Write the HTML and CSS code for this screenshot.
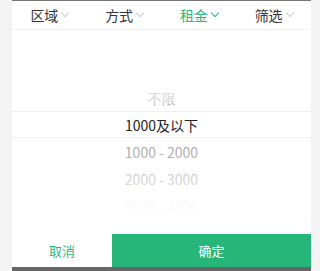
FILE: index.html
```html
<!DOCTYPE html>
<html lang="zh-CN">
<head>
  <meta charset="UTF-8">
  <title>租金筛选</title>
  <meta name="viewport" content="width=device-width, initial-scale=1.0">
  <link rel="stylesheet" href="styles.css">
</head>
<body>
  <div class="panel">
    <div class="topbar"></div>
    <div class="tabs">
      <div class="tab">区域<span class="arrow"></span></div>
      <div class="tab">方式<span class="arrow"></span></div>
      <div class="tab active">租金<span class="arrow"></span></div>
      <div class="tab">筛选<span class="arrow"></span></div>
    </div>
    <div class="picker">
      <div class="rows">
        <div class="row"></div>
        <div class="row"></div>
        <div class="row">不限</div>
        <div class="row selected">1000及以下</div>
        <div class="row">1000 - 2000</div>
        <div class="row">2000 - 3000</div>
        <div class="row">3000 - 4000</div>
      </div>
      <div class="fade"></div>
    </div>
    <div class="actions">
      <button class="btn-cancel">取消</button>
      <button class="btn-ok">确定</button>
    </div>
    <div class="under"></div>
  </div>
</body>
</html>
```

FILE: styles.css
```css
body {
  margin: 0;
  background: #f3f3f3;
  font-family: "Noto Sans CJK SC", "Noto Sans", sans-serif;
  color: #333;
}
.panel {
  margin-left: 12px;
  width: 299px;
  height: 271px;
  background: #fff;
  overflow: hidden;
}
.topbar {
  height: 1px;
  background: #777;
}
.tabs {
  display: flex;
  height: 28px;
  border-bottom: 1px solid #f2f2f2;
}
.tab {
  flex: 1;
  display: flex;
  align-items: center;
  justify-content: center;
  font-size: 14px;
  color: #333;
}
.tab.active {
  color: #2bb77c;
}
.arrow {
  width: 5px;
  height: 5px;
  margin-left: 4px;
  margin-top: -4px;
  border-right: 1px solid #ccc;
  border-bottom: 1px solid #ccc;
  transform: rotate(45deg);
}
.tab.active .arrow {
  border-color: #2bb77c;
}
.picker {
  position: relative;
  height: 204px;
  overflow: hidden;
}
.row {
  height: 27px;
  display: flex;
  align-items: center;
  justify-content: center;
  font-size: 14px;
  color: #999;
}
.row.selected {
  color: #222;
  border-top: 1px solid #efefef;
  border-bottom: 1px solid #efefef;
  height: 25px;
}
.fade {
  position: absolute;
  top: 0; left: 0;
  width: 100%; height: 100%;
  background: linear-gradient(to bottom,
    rgba(255,255,255,1) 0,
    rgba(255,255,255,0.6) 70px,
    rgba(255,255,255,0) 80px,
    rgba(255,255,255,0) 108px,
    rgba(255,255,255,0.15) 118px,
    rgba(255,255,255,0.55) 148px,
    rgba(255,255,255,0.92) 172px,
    rgba(255,255,255,1) 190px);
}
.actions {
  display: flex;
  height: 33px;
}
.actions button {
  border: none;
  font-family: inherit;
  font-size: 13px;
  padding: 0;
}
.btn-cancel {
  width: 100px;
  background: #fff;
  color: #2bb77c;
}
.btn-ok {
  flex: 1;
  background: #27b67a;
  color: #fff;
}
.under {
  height: 6px;
  background: #666;
}
```
